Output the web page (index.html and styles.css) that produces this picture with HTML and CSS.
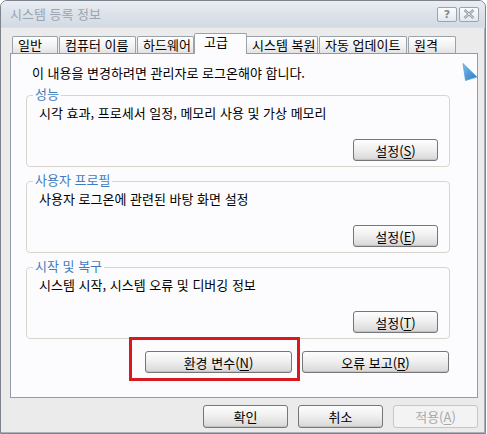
FILE: index.html
```html
<!DOCTYPE html>
<html lang="ko">
<head>
  <meta charset="UTF-8" />
  <title>시스템 등록 정보</title>
  <link rel="stylesheet" href="styles.css">
</head>
<body>

  <div class="ventana">
    <div class="titulo">
      <span class="titulo-texto">시스템 등록 정보</span>
      <div class="titulo-botones">
        <span class="tb-boton tb-ayuda">?</span>
        <span class="tb-boton">
          <svg width="12" height="10" viewBox="0 0 12 10">
            <path d="M1.5 1 L10.5 9 M10.5 1 L1.5 9" stroke="#8d97a4" stroke-width="2.4" fill="none" />
            <path d="M1.5 1 L10.5 9 M10.5 1 L1.5 9" stroke="#f4f6f8" stroke-width="0.8" fill="none" />
          </svg>
        </span>
      </div>
    </div>

    <div class="pestanas">
      <div class="pestana p-general">일반</div>
      <div class="pestana p-equipo">컴퓨터 이름</div>
      <div class="pestana p-hardware">하드웨어</div>
      <div class="pestana activa">고급</div>
      <div class="pestana p-restaurar">시스템 복원</div>
      <div class="pestana p-actualizar">자동 업데이트</div>
      <div class="pestana p-remoto">원격</div>
    </div>

    <div class="panel">
      <div class="aviso">이 내용을 변경하려면 관리자로 로그온해야 합니다.</div>

      <div class="grupo">
        <div class="grupo-titulo">성능</div>
        <div class="grupo-texto">시각 효과, 프로세서 일정, 메모리 사용 및 가상 메모리</div>
        <div class="grupo-acciones">
          <button class="boton">설정(<u>S</u>)</button>
        </div>
      </div>

      <div class="grupo">
        <div class="grupo-titulo">사용자 프로필</div>
        <div class="grupo-texto">사용자 로그온에 관련된 바탕 화면 설정</div>
        <div class="grupo-acciones">
          <button class="boton">설정(<u>E</u>)</button>
        </div>
      </div>

      <div class="grupo">
        <div class="grupo-titulo">시작 및 복구</div>
        <div class="grupo-texto">시스템 시작, 시스템 오류 및 디버깅 정보</div>
        <div class="grupo-acciones">
          <button class="boton">설정(<u>T</u>)</button>
        </div>
      </div>

      <div class="fila-extra">
        <span class="marcado">
          <button class="boton boton-ancho">환경 변수(<u>N</u>)</button>
        </span>
        <button class="boton boton-ancho">오류 보고(<u>R</u>)</button>
      </div>

      <svg class="cursor" width="16" height="18" viewBox="0 0 16 18">
        <defs>
          <linearGradient id="azul" x1="0" y1="0" x2="1" y2="1">
            <stop offset="0" stop-color="#7cc0ee" />
            <stop offset="1" stop-color="#2a78c0" />
          </linearGradient>
        </defs>
        <polygon points="1,0.5 15,14 3.5,17.5" fill="url(#azul)" stroke="#5aa2dc" stroke-width="0.8" />
      </svg>
    </div>

    <div class="pie">
      <button class="boton boton-pie">확인</button>
      <button class="boton boton-pie">취소</button>
      <button class="boton boton-pie" disabled>적용(<u>A</u>)</button>
    </div>
  </div>

</body>
</html>
```

FILE: styles.css
```css
* { box-sizing: border-box; margin: 0; padding: 0; }

html, body {
  height: 100%;
}

body {
  background: #ffffff;
  font-family: 'Noto Sans CJK KR', 'Noto Sans', sans-serif;
  font-size: 13px;
  color: #000;
  overflow: hidden;
}

.ventana {
  width: 486px;
  height: 434px;
  background: #ebebeb;
  border: 1px solid #7c838c;
  border-radius: 7px 7px 0 0;
  box-shadow: inset -1px -1px 0 #a9b0b8;
  overflow: hidden;
}

.titulo {
  height: 27px;
  display: flex;
  align-items: center;
  padding: 0 6px 0 9px;
  background: linear-gradient(#eaeef3, #dde3ea 45%, #d3dae3);
  border-bottom: 1px solid #d9dfe6;
}

.titulo-texto {
  color: #9ba5b1;
  line-height: 16px;
}

.titulo-botones {
  margin-left: auto;
  display: flex;
  gap: 2px;
}

.tb-boton {
  width: 20px;
  height: 15px;
  display: flex;
  justify-content: center;
  align-items: center;
  border: 1px solid #98a3b0;
  border-radius: 2px;
  background: linear-gradient(#fbfcfd, #e3e8ee);
}

.tb-ayuda {
  color: #7d8896;
  font-family: 'DejaVu Sans', sans-serif;
  font-weight: bold;
  font-size: 11px;
  line-height: 13px;
}

.pestanas {
  height: 25px;
  display: flex;
  align-items: flex-end;
  padding-left: 11px;
}

.pestana {
  position: relative;
  height: 17px;
  padding-left: 5px;
  line-height: 15px;
  white-space: nowrap;
  border: 1px solid #9aa3aa;
  border-bottom: none;
  border-radius: 2px 2px 0 0;
  background: linear-gradient(#ffffff, #f1f1f1 60%, #e2e2e2);
  margin-right: 1px;
}

.p-general { width: 46px; }
.p-equipo { width: 77px; }
.p-hardware { width: 57px; }
.p-restaurar { width: 72px; }
.p-actualizar { width: 88px; }
.p-remoto { width: 48px; }

.pestana.activa {
  width: 53px;
  height: 21px;
  margin: 0 0 -1px -1px;
  padding-left: 9px;
  line-height: 16px;
  background: #fcfcfe;
  z-index: 1;
}

.pestana.activa + .pestana {
  margin-left: -1px;
}

.panel {
  position: relative;
  width: 468px;
  height: 345px;
  margin-left: 9px;
  padding: 11px 0 0 15px;
  background: #fcfcfe;
  border: 1px solid #939ca3;
}

.aviso {
  padding-left: 6px;
  line-height: 16px;
}

.grupo {
  width: 424px;
  margin-top: 13px;
  border: 1px solid #d6d6ce;
  border-radius: 4px;
  padding: 0 11px 5px 12px;
}

.aviso + .grupo {
  margin-top: 14px;
}

.grupo + .grupo {
  margin-top: 14px;
}

.grupo-titulo {
  width: fit-content;
  margin: -10px 0 0 -6px;
  padding: 0 2px;
  line-height: 16px;
  color: #3f7cbf;
  background: #fcfcfe;
}

.grupo-texto {
  margin-top: 3px;
  line-height: 16px;
}

.grupo-acciones {
  display: flex;
  justify-content: flex-end;
  margin-top: 18px;
}

.boton {
  width: 85px;
  height: 22px;
  font-family: inherit;
  font-size: 13px;
  color: #000;
  border: 1px solid #767676;
  border-radius: 3px;
  background: linear-gradient(#fdfdfd, #f0f0f0 45%, #dcdcdc 90%, #cfcfcf);
  box-shadow: inset 0 -1px 0 #c4c4c4;
}

.boton u {
  text-underline-offset: 2px;
}

.boton:disabled {
  color: #a9a9a9;
  border-color: #c6c6c6;
  background: #f3f3f3;
  box-shadow: none;
}

.fila-extra {
  width: 424px;
  display: flex;
  justify-content: flex-end;
  gap: 10px;
  padding-right: 1px;
  margin-top: 12px;
}

.boton-ancho {
  width: 147px;
}

.marcado {
  position: relative;
  display: flex;
}

.marcado::after {
  content: "";
  position: absolute;
  top: -14px;
  left: -16px;
  right: -8px;
  bottom: -8px;
  border: 3px solid #d81a20;
  pointer-events: none;
}

.cursor {
  position: absolute;
  top: 9px;
  left: 451px;
}

.pie {
  display: flex;
  justify-content: flex-end;
  gap: 10px;
  padding-right: 7px;
  margin-top: 7px;
}

.boton-pie {
  height: 23px;
}
```
